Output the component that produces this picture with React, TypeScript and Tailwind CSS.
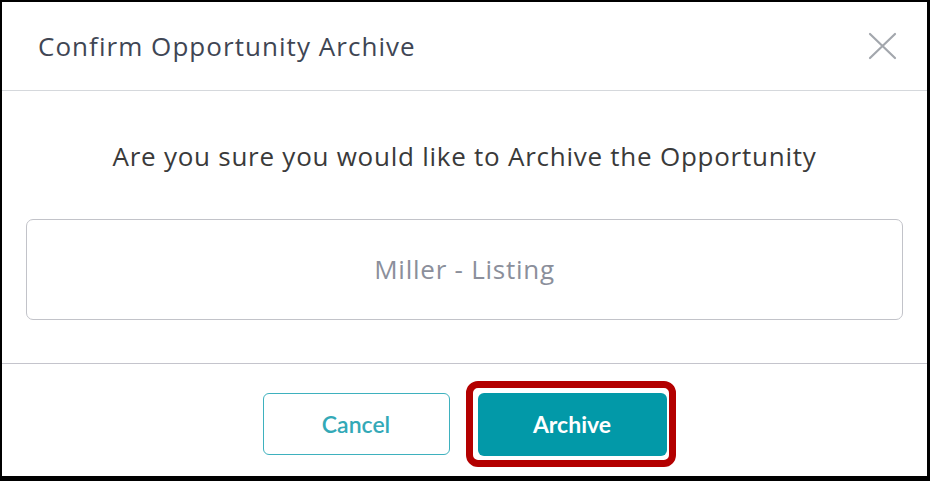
export default function App() {
  return (
    <div className="w-[930px] h-[481px] bg-white border-black border-t-2 border-l-2 border-r-[3px] border-b-[5px] flex flex-col font-['Open_Sans',sans-serif]">
      {/* Header */}
      <div className="h-[89px] flex items-center justify-between pl-[36px] pr-[28px] border-b border-[#d5d8dc]">
        <h1 className="text-[26px] text-[#3f4654] tracking-[1.05px]">Confirm Opportunity Archive</h1>
        <button className="w-[34px] h-[34px] flex items-center justify-center text-[#a3a7ad]">
          <svg width="29" height="28" viewBox="0 0 29 28" fill="none" stroke="currentColor" strokeWidth="2.2" strokeLinecap="round">
            <path d="M2 2L27 26M27 2L2 26" />
          </svg>
        </button>
      </div>

      {/* Body */}
      <div className="flex flex-col items-center pt-[49px] pb-[43px] px-[24px] border-b border-[#c4c4cc]">
        <p className="text-[26px] leading-[32px] text-[#3a3a3a] tracking-[0.75px]">Are you sure you would like to Archive the Opportunity</p>
        <div className="mt-[47px] w-full h-[101px] border border-[#c2c3c9] rounded-[7px] flex items-center justify-center">
          <span className="text-[26px] text-[#8b8f9b] tracking-[0.75px]">Miller - Listing</span>
        </div>
      </div>

      {/* Footer */}
      <div className="flex justify-center gap-[28px] pt-[29px] font-['Lato',sans-serif]">
        <button className="w-[187px] h-[62px] border border-[#3eb1be] rounded-[6px] text-[#33a9b7] text-[23px] font-semibold">
          Cancel
        </button>
        <div className="relative">
          <button className="w-[189px] h-[63px] bg-[#0299a8] rounded-[6px] text-white text-[23px] font-bold">
            Archive
          </button>
          <div className="absolute -left-[12px] -top-[12px] -right-[9px] -bottom-[11px] border-[7px] border-[#b30000] rounded-[12px]"></div>
        </div>
      </div>
    </div>
  );
}
